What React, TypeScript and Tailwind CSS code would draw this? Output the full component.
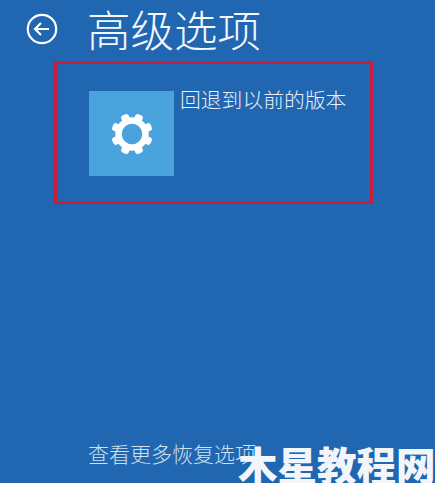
const CJK = "font-['Noto_Sans_CJK_SC','Noto_Sans',sans-serif]";

function BackIcon() {
  return (
    <svg width="32" height="32" viewBox="0 0 32 32" fill="none" stroke="#fff" strokeWidth="2.2">
      <circle cx="16" cy="16" r="14.2" />
      <path d="M23 16H9.5M15 10l-6 6 6 6" />
    </svg>
  );
}

function GearIcon() {
  const teeth = [0, 45, 90, 135, 180, 225, 270, 315];
  return (
    <svg width="44" height="44" viewBox="0 0 44 44" fill="none">
      {teeth.map((deg) => (
        <rect key={deg} x="18" y="1.2" width="8" height="10" rx="2.8" fill="#fff" transform={`rotate(${deg + 22.5} 22 22)`} />
      ))}
      <circle cx="22" cy="22" r="13.5" stroke="#fff" strokeWidth="6.4" />
    </svg>
  );
}

export default function App() {
  return (
    <div className={`relative flex h-[483px] w-[435px] flex-col overflow-hidden bg-[#2066b1] text-white ${CJK}`}>
      <div className="flex h-[61px] shrink-0 items-center pb-[3px] pl-[26px]">
        <BackIcon />
        <h1 className="ml-[29px] whitespace-nowrap text-[43.5px] font-light leading-[58px] text-[#f4f8fc]">高级选项</h1>
      </div>

      <div className="ml-[54px] flex h-[143px] w-[319px] shrink-0 border-[3px] border-[#c4203a] pl-[32px] pt-[27px]">
        <div className="flex h-[85px] w-[85px] items-center justify-center bg-[#4ba3de]">
          <GearIcon />
        </div>
        <p className="ml-[6px] text-[20.8px] font-light leading-[16px] text-[#e8f0f8]">回退到以前的版本</p>
      </div>

      <p className="ml-[88px] mt-[235px] text-[21px] font-light leading-7 text-[#cfe0f0]">查看更多恢复选项</p>

      <span className="absolute bottom-[-5px] left-[238px] whitespace-nowrap text-[39.5px] font-black leading-[48px] text-[#f2f6fb]">
        木星教程网
      </span>
    </div>
  );
}
